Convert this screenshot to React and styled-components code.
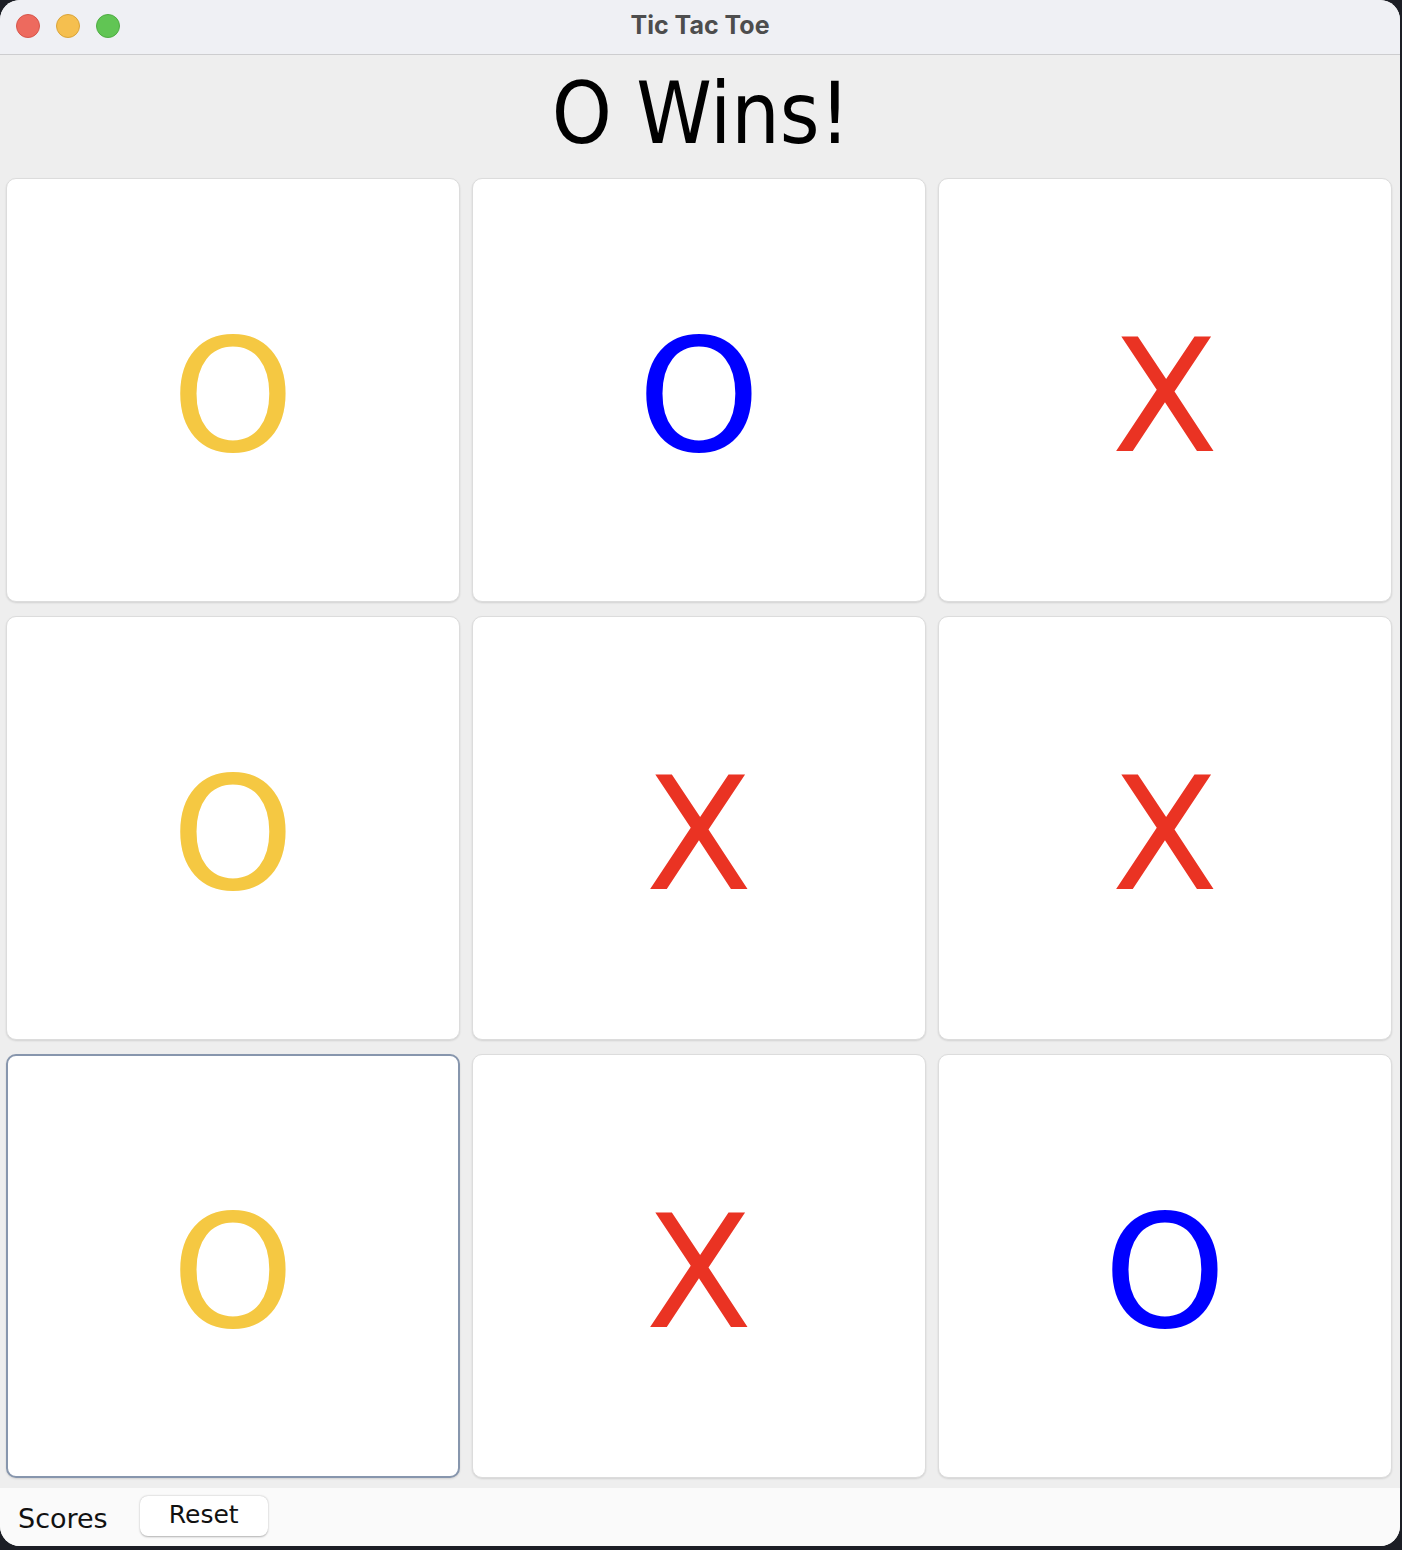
import React, { useState } from 'react';
import styled, { createGlobalStyle } from 'styled-components';

const GlobalStyle = createGlobalStyle`
  html, body {
    margin: 0;
    padding: 0;
    background: #1c1e25;
  }
  body {
    font-family: "DejaVu Sans", "Liberation Sans", sans-serif;
  }
`;

const initialBoard = ['O', 'O', 'X', 'O', 'X', 'X', 'O', 'X', 'O'];
const winLine = [0, 3, 6];

const App = () => {
  const [board] = useState(initialBoard);
  const [selected] = useState(6);

  return (
    <>
      <GlobalStyle />
      <Window>
        <TitleBar>
          <Lights>
            <Light color='#ed6a5e' edge='#d6564b' />
            <Light color='#f5bf4f' edge='#d9a43a' />
            <Light color='#61c554' edge='#4fac43' />
          </Lights>
          <Title>Tic Tac Toe</Title>
        </TitleBar>
        <Content>
          <Status>O Wins!</Status>
          <Board>
            {board.map((mark, i) => (
              <Cell key={i} selected={i === selected}>
                <Mark mark={mark} winning={winLine.includes(i)}>
                  {mark}
                </Mark>
              </Cell>
            ))}
          </Board>
        </Content>
        <Footer>
          <ScoresLabel>Scores</ScoresLabel>
          <ResetButton>Reset</ResetButton>
        </Footer>
      </Window>
    </>
  );
};

const Window = styled.div`
  width: 1400px;
  height: 1546px;
  display: flex;
  flex-direction: column;
  background: #eeeeee;
  border-radius: 20px;
  overflow: hidden;
`;

const TitleBar = styled.div`
  position: relative;
  height: 54px;
  flex-shrink: 0;
  display: flex;
  align-items: center;
  justify-content: center;
  background: #eff0f4;
  border-bottom: 1px solid #cdcdcf;
`;

const Lights = styled.div`
  position: absolute;
  left: 16px;
  top: 14px;
  display: flex;
  gap: 16px;
`;

const Light = styled.span`
  width: 24px;
  height: 24px;
  border-radius: 50%;
  background: ${(p) => p.color};
  border: 0.5px solid ${(p) => p.edge};
  box-sizing: border-box;
`;

const Title = styled.div`
  font-family: "Inter", "Liberation Sans", sans-serif;
  font-weight: 700;
  font-size: 25px;
  color: #4d4d4d;
  margin-top: -4px;
`;

const Content = styled.div`
  flex: 1;
  display: flex;
  flex-direction: column;
  padding: 0 8px 0 6px;
`;

const Status = styled.div`
  height: 123px;
  display: flex;
  align-items: center;
  justify-content: center;
  font-family: "DejaVu Sans Condensed", "DejaVu Sans", sans-serif;
  font-stretch: condensed;
  font-size: 85px;
  color: #000;
  padding: 0 0 6px 4px;
  box-sizing: border-box;
`;

const Board = styled.div`
  display: grid;
  grid-template-columns: repeat(3, 454px);
  grid-template-rows: repeat(3, 424px);
  column-gap: 12px;
  row-gap: 14px;
`;

const Cell = styled.div`
  display: flex;
  align-items: center;
  justify-content: center;
  background: #fff;
  border-radius: 10px;
  box-sizing: border-box;
  border: ${(p) => (p.selected ? '2px solid #8796ad' : '1px solid #dcdcdc')};
  box-shadow: 0 1px 2px rgba(0, 0, 0, 0.12);
`;

const Mark = styled.span`
  font-size: 156px;
  line-height: 1;
  margin-top: 13px;
  color: ${(p) =>
    p.mark === 'X' ? '#ea3323' : p.winning ? '#f5c842' : '#0000ff'};
`;

const Footer = styled.div`
  height: 58px;
  margin-top: 10px;
  flex-shrink: 0;
  display: flex;
  align-items: flex-start;
  gap: 32px;
  padding: 8px 0 0 18px;
  box-sizing: border-box;
  background: #fafafa;
`;

const ScoresLabel = styled.span`
  font-size: 27px;
  color: #111;
  margin-top: 7px;
`;

const ResetButton = styled.button`
  width: 128px;
  height: 40px;
  border: none;
  border-radius: 8px;
  background: #fff;
  box-shadow: 0 0.5px 2px rgba(0, 0, 0, 0.3);
  font-family: "DejaVu Sans", sans-serif;
  font-size: 25px;
  color: #111;
  padding: 0 0 4px;
`;

export default App;
